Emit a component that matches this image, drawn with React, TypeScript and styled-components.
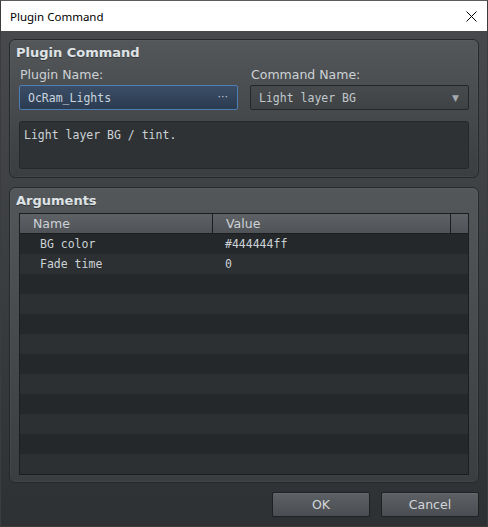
import React from "react";
import styled, { createGlobalStyle } from "styled-components";

const Global = createGlobalStyle`
  html, body { margin: 0; padding: 0; background: #ffffff; }
  * { box-sizing: border-box; }
`;

const Window = styled.div`
  width: 488px;
  height: 527px;
  border: 1px solid #3a3c3e;
  border-top-color: #5c5c5c;
  display: flex;
  flex-direction: column;
  overflow: hidden;
`;

const TitleBar = styled.div`
  height: 30px;
  flex: none;
  background: #ffffff;
  display: flex;
  align-items: center;
  justify-content: space-between;
  padding: 0 10px 0 9px;
  font-family: "Noto Sans", "Open Sans", sans-serif;
  font-size: 11.5px;
  color: #000000;
`;

const CloseIcon = styled.svg`
  width: 11px;
  height: 11px;
`;

const Body = styled.div`
  flex: 1;
  display: flex;
  flex-direction: column;
  gap: 9px;
  padding: 8px 8px 9px 8px;
  background: linear-gradient(#47494c, #2e3134);
  font-family: "DejaVu Sans", "Liberation Sans", sans-serif;
  color: #c9ced2;
`;

const Group = styled.section<{ $grow?: boolean }>`
  border: 1px solid #26282a;
  border-radius: 6px;
  background: linear-gradient(#53575a, #3b3e41);
  box-shadow: inset 0 0 0 1px rgba(255, 255, 255, 0.03);
  padding: 5px 9px ${(p) => (p.$grow ? 7 : 8)}px 9px;
  display: flex;
  flex-direction: column;
  ${(p) => (p.$grow ? "flex: 1; min-height: 0;" : "flex: none;")}
`;

const GroupTitle = styled.div`
  font-weight: bold;
  font-size: 13px;
  line-height: 16px;
  color: #dfe3e6;
  margin-left: -3px;
  text-shadow: 0 1px 0 rgba(0, 0, 0, 0.35);
`;

const FieldGrid = styled.div`
  display: grid;
  grid-template-columns: 1fr 1fr;
  column-gap: 12px;
  margin-top: 6px;
`;

const Field = styled.div`
  display: flex;
  flex-direction: column;
`;

const Label = styled.label`
  font-size: 12.5px;
  line-height: 15px;
  color: #cdd2d6;
  margin-bottom: 3px;
  margin-left: 1px;
`;

const Box = styled.div<{ $active?: boolean }>`
  height: 25px;
  border: 1px solid ${(p) => (p.$active ? "#4c7db4" : "#24262a")};
  border-radius: 2px;
  background: ${(p) =>
    p.$active
      ? "linear-gradient(#3b4e66, #2b3b50)"
      : "linear-gradient(#474b4e, #3e4245)"};
  display: flex;
  align-items: center;
  justify-content: space-between;
  padding: 0 9px 0 8px;
  font-family: "DejaVu Sans Mono", "Liberation Mono", monospace;
  font-size: 11.5px;
  color: ${(p) => (p.$active ? "#c9d4df" : "#c2c8cc")};
`;

const Dots = styled.span`
  font-family: "DejaVu Sans", sans-serif;
  font-size: 11px;
  color: #c4ccd4;
  margin-bottom: 3px;
`;

const Arrow = styled.span`
  font-size: 9px;
  color: #a3a9ad;
  font-family: "DejaVu Sans", sans-serif;
`;

const Description = styled.div`
  margin-top: 11px;
  height: 48px;
  border: 1px solid #25272a;
  border-radius: 3px;
  background: #2f3235;
  padding: 6px 4px;
  font-family: "DejaVu Sans Mono", "Liberation Mono", monospace;
  font-size: 11.5px;
  line-height: 14px;
  color: #cdd2d6;
`;

const Table = styled.div`
  margin-top: 4px;
  flex: 1;
  min-height: 0;
  border: 1px solid #1b1d1f;
  background: #24282b;
  display: flex;
  flex-direction: column;
  overflow: hidden;
`;

const HeaderRow = styled.div`
  display: grid;
  grid-template-columns: 193px 238px 1fr;
  height: 20px;
  flex: none;
  border-bottom: 1px solid #1b1d1f;
  background: linear-gradient(#5e6266, #4f5357);
`;

const HeaderCell = styled.div<{ $last?: boolean }>`
  border-right: ${(p) => (p.$last ? "none" : "1px solid #1b1d1f")};
  font-size: 12.5px;
  line-height: 19px;
  padding-left: 13px;
  color: #cdd2d6;
`;

const Row = styled.div<{ $odd: boolean }>`
  display: grid;
  grid-template-columns: 193px 1fr;
  height: 20px;
  flex: none;
  background: ${(p) => (p.$odd ? "#2c3033" : "#24282b")};
  font-family: "DejaVu Sans Mono", "Liberation Mono", monospace;
  font-size: 11.5px;
  line-height: 20px;
  color: #cdd2d6;
`;

const Cell = styled.div<{ $indent: number }>`
  padding-left: ${(p) => p.$indent}px;
  white-space: pre;
`;

const ButtonBar = styled.div`
  display: flex;
  justify-content: flex-end;
  gap: 11px;
  flex: none;
`;

const Button = styled.button`
  width: 98px;
  height: 25px;
  border: 1px solid #1e2022;
  border-radius: 2px;
  background: linear-gradient(#5d6165, #4a4e52);
  color: #d3d7da;
  font-family: "DejaVu Sans", "Liberation Sans", sans-serif;
  font-size: 12.5px;
  padding: 0;
  box-shadow: inset 0 1px 0 rgba(255, 255, 255, 0.06);
`;

const args = [
  { name: "BG color", value: "#444444ff" },
  { name: "Fade time", value: "0" },
];

export default function App() {
  const rows = Array.from({ length: 12 }, (_, i) => args[i] ?? { name: "", value: "" });
  return (
    <>
      <Global />
      <Window>
        <TitleBar>
          <span>Plugin Command</span>
          <CloseIcon viewBox="0 0 11 11">
            <path d="M0.5 0.5 L10.5 10.5 M10.5 0.5 L0.5 10.5" stroke="#000" strokeWidth="1" />
          </CloseIcon>
        </TitleBar>
        <Body>
          <Group>
            <GroupTitle>Plugin Command</GroupTitle>
            <FieldGrid>
              <Field>
                <Label>Plugin Name:</Label>
                <Box $active>
                  <span>OcRam_Lights</span>
                  <Dots>···</Dots>
                </Box>
              </Field>
              <Field>
                <Label>Command Name:</Label>
                <Box>
                  <span>Light layer BG</span>
                  <Arrow>▼</Arrow>
                </Box>
              </Field>
            </FieldGrid>
            <Description>Light layer BG / tint.</Description>
          </Group>
          <Group $grow>
            <GroupTitle>Arguments</GroupTitle>
            <Table>
              <HeaderRow>
                <HeaderCell>Name</HeaderCell>
                <HeaderCell>Value</HeaderCell>
                <HeaderCell $last />
              </HeaderRow>
              {rows.map((r, i) => (
                <Row key={i} $odd={i % 2 === 1}>
                  <Cell $indent={20}>{r.name}</Cell>
                  <Cell $indent={12}>{r.value}</Cell>
                </Row>
              ))}
            </Table>
          </Group>
          <ButtonBar>
            <Button>OK</Button>
            <Button>Cancel</Button>
          </ButtonBar>
        </Body>
      </Window>
    </>
  );
}
